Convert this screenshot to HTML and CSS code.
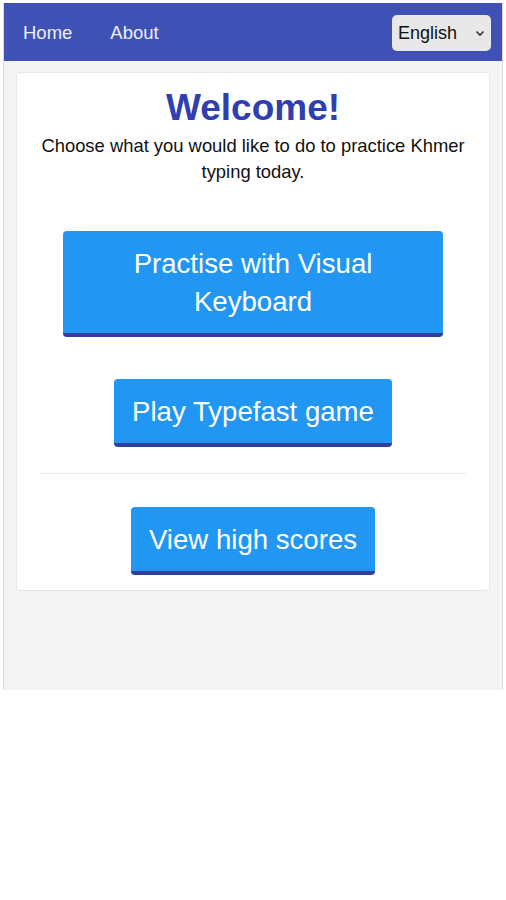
FILE: index.html
```html
<!DOCTYPE html>
<html lang="en">
<head>
<meta charset="utf-8">
<title>Khmer Typing</title>
<link rel="stylesheet" href="styles.css">
</head>
<body>
<div class="app">
  <nav class="nav">
    <div class="nav-links">
      <a class="nav-link" href="#">Home</a>
      <a class="nav-link" href="#">About</a>
    </div>
    <div class="lang">
      <span class="lang-text">English</span>
      <svg class="lang-caret" width="10" height="7" viewBox="0 0 10 7"><path d="M1.5 1.5 L5 5 L8.5 1.5" fill="none" stroke="#333" stroke-width="1.6"/></svg>
    </div>
  </nav>
  <main class="main">
    <section class="card">
      <h1 class="title">Welcome!</h1>
      <p class="intro">Choose what you would like to do to practice Khmer typing today.</p>
      <div class="actions">
        <a class="btn btn-wide" href="#">Practise with Visual Keyboard</a>
        <a class="btn btn-mid" href="#">Play Typefast game</a>
      </div>
      <hr class="divider">
      <div class="actions actions-bottom">
        <a class="btn btn-scores" href="#">View high scores</a>
      </div>
    </section>
  </main>
</div>
</body>
</html>
```
FILE: styles.css
```css
* { box-sizing: border-box; }
html, body { margin: 0; padding: 0; background: #fff; }
body {
  font-family: "Liberation Sans", Arial, sans-serif;
  padding: 3px 3px 0 3px;
}
.app {
  width: 500px;
  height: 687px;
  background: #f4f4f4;
  border-left: 1px solid #dcdcdc;
  border-right: 1px solid #dcdcdc;
  display: flex;
  flex-direction: column;
}
.nav {
  height: 58px;
  background: #3f51b5;
  display: flex;
  align-items: center;
  justify-content: space-between;
  padding: 1px 11px 0 19px;
}
.nav-links { display: flex; gap: 38px; }
.nav-link {
  color: #eef0fb;
  text-decoration: none;
  font-size: 18.5px;
}
.lang {
  width: 99px;
  height: 36px;
  background: #e8e8e8;
  border-radius: 5px;
  display: flex;
  align-items: center;
  justify-content: space-between;
  padding: 1px 6px 0 6px;
}
.lang-text { font-size: 18px; color: #111; }
.main {
  padding: 11px 12px 0 12px;
}
.card {
  background: #fff;
  border: 1px solid #e8e8e8;
  border-radius: 3px;
  height: 519px;
  padding: 16px 20px 0 20px;
  text-align: center;
}
.title {
  margin: 0;
  font-size: 37px;
  font-weight: bold;
  color: #303fb0;
  line-height: 38px;
}
.intro {
  margin: 6px 0 0 0;
  font-size: 18.4px;
  line-height: 26px;
  color: #111;
}
.actions {
  display: flex;
  flex-direction: column;
  align-items: center;
  gap: 42px;
  margin-top: 46px;
}
.btn {
  display: block;
  background: #2196f3;
  color: #fff;
  text-decoration: none;
  font-size: 27.6px;
  line-height: 38px;
  border-radius: 4px;
  border-bottom: 4px solid #303f9f;
  padding: 14px 18px 12px 18px;
}
.btn-wide { width: 380px; padding: 14px 40px 12px 40px; }
.divider {
  border: 0;
  border-top: 1px solid #ececec;
  margin: 26px 3px 0 3px;
}
.actions-bottom { margin-top: 33px; }
```
